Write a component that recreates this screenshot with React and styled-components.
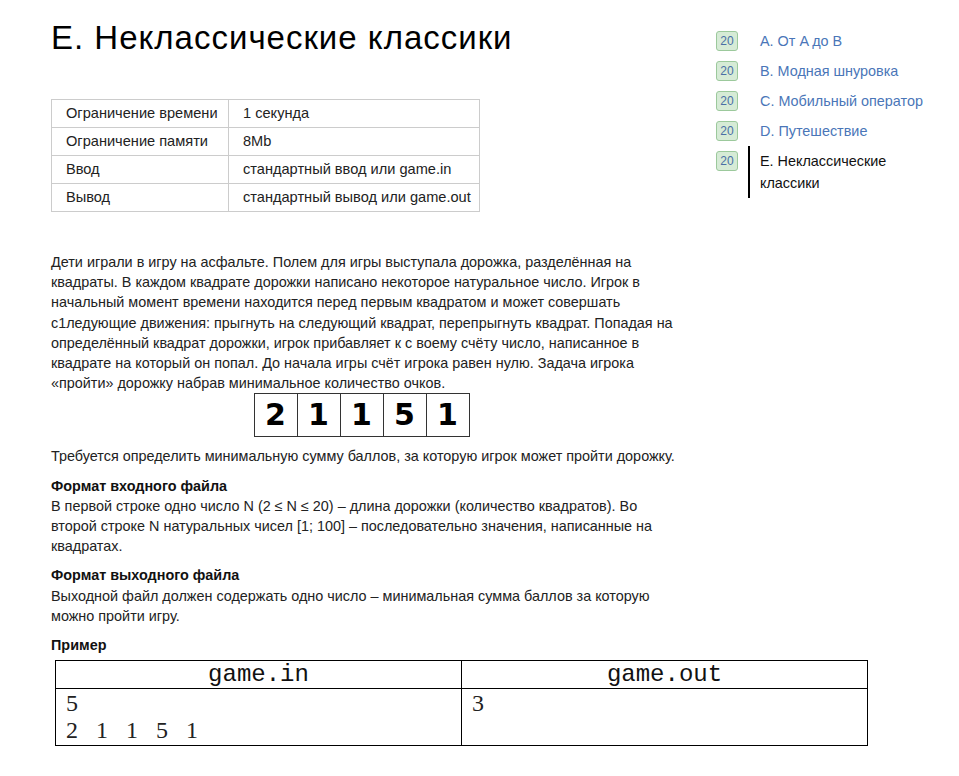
import React from 'react';
import styled, {createGlobalStyle} from 'styled-components';

const GlobalStyle = createGlobalStyle`
  body {
    margin: 0;
    background: #fff;
    font-family: "Liberation Sans", Arial, sans-serif;
    color: #222;
  }
`;

const Page = styled.div`
  display: flex;
  align-items: flex-start;
  padding: 18px 0 30px 51px;
`;

const Main = styled.main`
  flex: 0 0 632px;
  min-width: 0;
  font-size: 14.4px;
  line-height: 20.2px;
`;

const Title = styled.h1`
  margin: 0 0 41px;
  font-size: 33px;
  letter-spacing: 1px;
  font-weight: 400;
  line-height: 40px;
  color: #000;
`;

const Limits = styled.table`
  border-collapse: collapse;
  margin-bottom: 40px;
  font-size: 14.6px;
  table-layout: fixed;
  width: 429px;

  td {
    border: 1px solid #ccc;
    padding: 3px 0 3px 14px;
    height: 21px;
    line-height: 21px;
    white-space: nowrap;
  }

  td:first-child {
    width: 162px;
  }
`;

const Text = styled.p`
  margin: 0 0 ${(p) => p.$gap || '9px'};
`;

const Heading = styled.h3`
  margin: 0;
  font-size: 14.4px;
  font-weight: 700;
  line-height: 20.2px;
  color: #111;
`;

const Strip = styled.div`
  display: flex;
  justify-content: center;
  margin: 0 10px 9px 0;
`;

const Cell = styled.div`
  width: 42px;
  height: 42px;
  border: 1px solid #333;
  margin-left: -1px;
  display: flex;
  align-items: center;
  justify-content: center;
  font-family: "DejaVu Sans", sans-serif;
  font-weight: 700;
  font-size: 30px;
  color: #000;
`;

const Sample = styled.table`
  width: 813px;
  margin: 5px 0 0 4px;
  border-collapse: collapse;

  th, td {
    border: 1px solid #000;
    width: 50%;
  }

  th {
    font-family: "Liberation Mono", "Courier New", monospace;
    font-weight: 400;
    font-size: 24px;
    height: 27px;
    line-height: 27px;
    padding: 0;
    color: #111;
  }

  td {
    font-family: "Liberation Serif", "Times New Roman", serif;
    font-size: 24px;
    line-height: 27px;
    padding: 1px 10px 1px;
    vertical-align: top;
    white-space: pre;
    color: #222;
  }
`;

const Sidebar = styled.nav`
  margin: 8px 0 0 33px;
  display: flex;
  flex-direction: column;
`;

const Item = styled.div`
  display: flex;
  align-items: flex-start;
  font-size: 14.4px;
  line-height: 22px;
`;

const Badge = styled.span`
  box-sizing: border-box;
  flex: 0 0 22px;
  height: 20px;
  margin-top: 5px;
  border: 1px solid #9cc99c;
  border-radius: 3px;
  background: #d6ebd6;
  color: #4a6fa5;
  font-size: 12px;
  line-height: 18px;
  text-align: center;
`;

const ItemLink = styled.a`
  margin-left: 10px;
  width: 172px;
  padding: 4px 0 4px 10px;
  border-left: 2px solid ${(p) => (p.$active ? '#000' : 'transparent')};
  color: ${(p) => (p.$active ? '#111' : '#4a76b8')};
  text-decoration: none;
`;

const problems = [
  'A. От A до B',
  'B. Модная шнуровка',
  'C. Мобильный оператор',
  'D. Путешествие',
  'E. Неклассические классики',
];

export default function App() {
  return (
    <>
      <GlobalStyle/>
      <Page>
        <Main>
          <Title>E. Неклассические классики</Title>
          <Limits>
            <tbody>
              <tr><td>Ограничение времени</td><td>1 секунда</td></tr>
              <tr><td>Ограничение памяти</td><td>8Mb</td></tr>
              <tr><td>Ввод</td><td>стандартный ввод или game.in</td></tr>
              <tr><td>Вывод</td><td>стандартный вывод или game.out</td></tr>
            </tbody>
          </Limits>
          <Text $gap="0">
            Дети играли в игру на асфальте. Полем для игры выступала дорожка, разделённая на
            квадраты. В каждом квадрате дорожки написано некоторое натуральное число. Игрок в
            начальный момент времени находится перед первым квадратом и может совершать
            c1ледующие движения: прыгнуть на следующий квадрат, перепрыгнуть квадрат. Попадая на
            определённый квадрат дорожки, игрок прибавляет к с воему счёту число, написанное в
            квадрате на который он попал. До начала игры счёт игрока равен нулю. Задача игрока
            «пройти» дорожку набрав минимальное количество очков.
          </Text>
          <Strip>
            {[2, 1, 1, 5, 1].map((n, i) => <Cell key={i}>{n}</Cell>)}
          </Strip>
          <Text>Требуется определить минимальную сумму баллов, за которую игрок может пройти дорожку.</Text>
          <Heading>Формат входного файла</Heading>
          <Text>
            В первой строке одно число N (2 ≤ N ≤ 20) – длина дорожки (количество квадратов). Во
            второй строке N натуральных чисел [1; 100] – последовательно значения, написанные на
            квадратах.
          </Text>
          <Heading>Формат выходного файла</Heading>
          <Text>
            Выходной файл должен содержать одно число – минимальная сумма баллов за которую
            можно пройти игру.
          </Text>
          <Heading>Пример</Heading>
          <Sample>
            <thead>
              <tr><th>game.in</th><th>game.out</th></tr>
            </thead>
            <tbody>
              <tr><td>{'5\n2   1   1   5   1'}</td><td>3</td></tr>
            </tbody>
          </Sample>
        </Main>
        <Sidebar>
          {problems.map((p, i) => (
            <Item key={p}>
              <Badge>20</Badge>
              <ItemLink href="#" $active={i === problems.length - 1}>{p}</ItemLink>
            </Item>
          ))}
        </Sidebar>
      </Page>
    </>
  );
}
